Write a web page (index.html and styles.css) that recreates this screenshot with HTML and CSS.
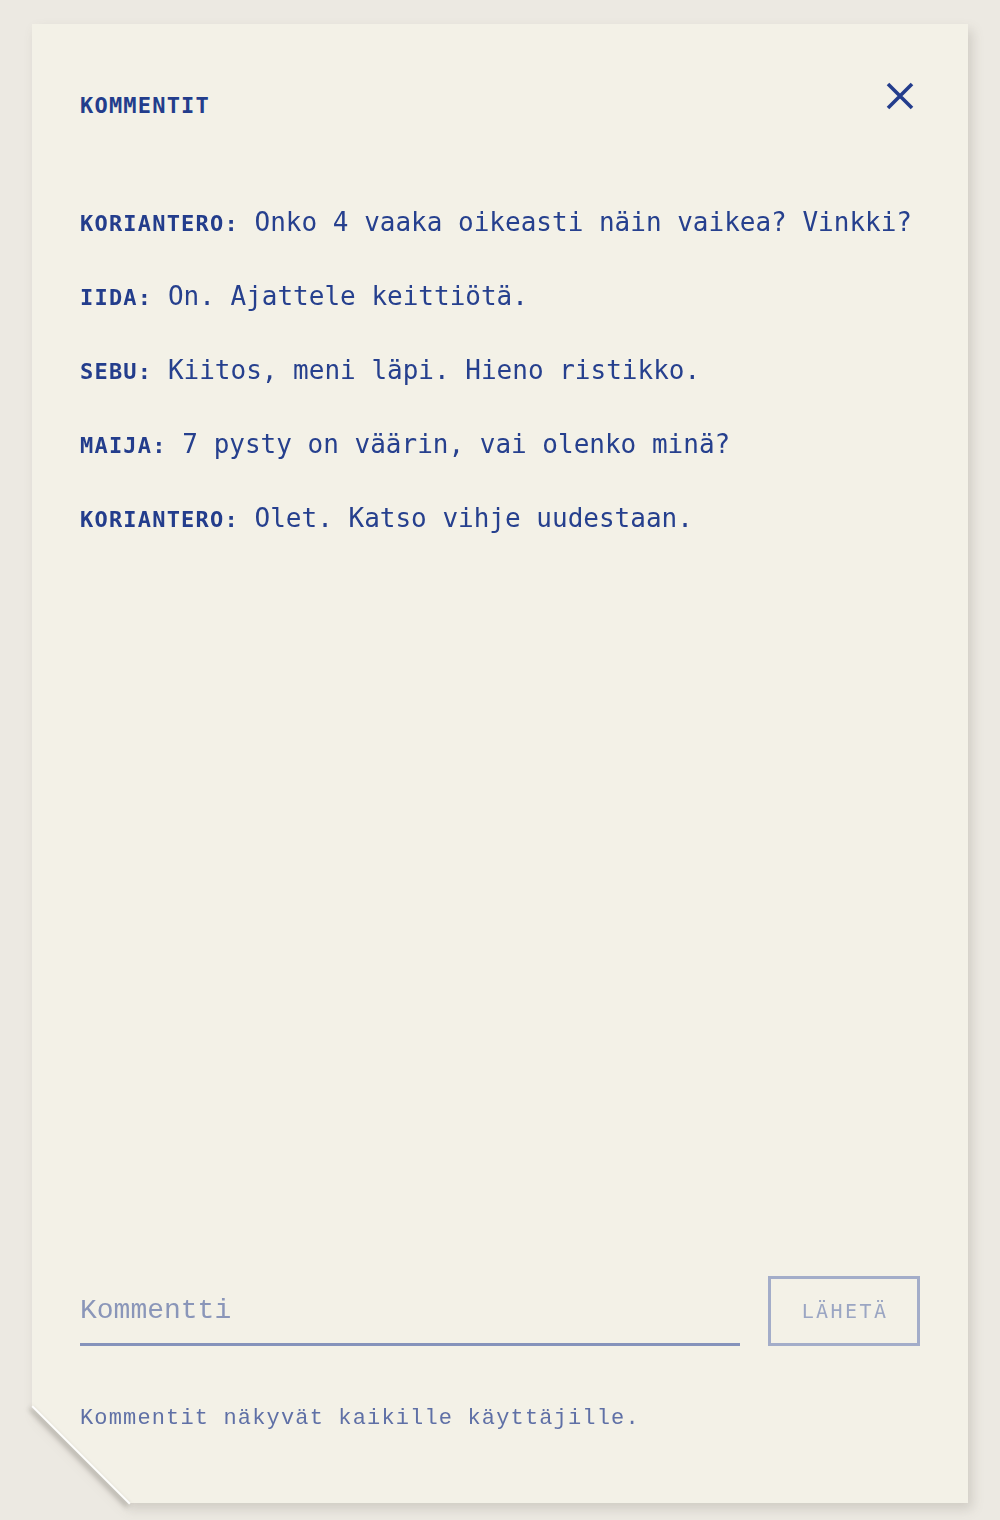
FILE: index.html
```html
<!DOCTYPE html>
<html lang="fi">
<head>
<meta charset="utf-8">
<title>Kommentit</title>
<link rel="stylesheet" href="styles.css">
</head>
<body>
<div class="sheet">
  <div class="card">
    <div class="head">
      <h1 class="title">KOMMENTIT</h1>
      <button class="close" aria-label="Sulje">
        <svg width="28" height="28" viewBox="0 0 28 28"><path d="M2 2 L26 26 M26 2 L2 26" stroke="#233d8c" stroke-width="3.6" fill="none"/></svg>
      </button>
    </div>
    <ul class="comments">
      <li class="comment"><span class="name">KORIANTERO:</span> Onko 4 vaaka oikeasti näin vaikea? Vinkki?</li>
      <li class="comment"><span class="name">IIDA:</span> On. Ajattele keittiötä.</li>
      <li class="comment"><span class="name">SEBU:</span> Kiitos, meni läpi. Hieno ristikko.</li>
      <li class="comment"><span class="name">MAIJA:</span> 7 pysty on väärin, vai olenko minä?</li>
      <li class="comment"><span class="name">KORIANTERO:</span> Olet. Katso vihje uudestaan.</li>
    </ul>
    <div class="spacer"></div>
    <form class="compose">
      <input class="field" type="text" placeholder="Kommentti">
      <button class="send" type="button">LÄHETÄ</button>
    </form>
    <p class="note">Kommentit näkyvät kaikille käyttäjille.</p>
  </div>
  <div class="fold"></div>
</div>
</body>
</html>
```
FILE: styles.css
```css
html, body {
  margin: 0;
  padding: 0;
}
body {
  background: #ece9e2;
  width: 1000px;
  height: 1520px;
  overflow: hidden;
}
.sheet {
  position: relative;
  margin: 24px 0 0 32px;
  width: 936px;
  height: 1479px;
  filter: drop-shadow(4px 6px 6px rgba(60, 55, 45, 0.16));
}
.card {
  box-sizing: border-box;
  height: 100%;
  background: #f3f1e7;
  padding: 0 48px;
  display: flex;
  flex-direction: column;
  clip-path: polygon(0 0, 100% 0, 100% 100%, 97px 100%, 0 calc(100% - 97px));
}
.fold {
  position: absolute;
  left: -20px;
  bottom: 47px;
  width: 138px;
  height: 2px;
  background: #ffffff;
  transform: rotate(45deg);
  box-shadow: 0 3px 5px rgba(60, 55, 45, 0.5);
}
.head {
  display: flex;
  justify-content: space-between;
  align-items: flex-start;
  margin-top: 56px;
}
.title {
  margin: 15px 0 0;
  font: bold 22px/22px "DejaVu Sans Mono", monospace;
  letter-spacing: 1.2px;
  color: #233d8c;
}
.close {
  width: 40px;
  height: 32px;
  margin-right: 0;
  padding: 0;
  border: 0;
  background: transparent;
  display: flex;
  align-items: center;
  justify-content: center;
}
.comments {
  list-style: none;
  margin: 88px 0 0;
  padding: 0;
  display: flex;
  flex-direction: column;
  gap: 40px;
}
.comment {
  height: 34px;
  font: 26px/34px "DejaVu Sans Mono", monospace;
  color: #26408e;
  white-space: nowrap;
}
.name {
  font: bold 22px/1 "DejaVu Sans Mono", monospace;
  letter-spacing: 1.2px;
  color: #233d8c;
}
.spacer {
  flex: 1;
}
.compose {
  display: flex;
  align-items: flex-end;
  gap: 28px;
  margin: 0;
}
.field {
  flex: 1;
  min-width: 0;
  box-sizing: border-box;
  height: 60px;
  padding: 0 0 8px;
  border: 0;
  border-bottom: 3px solid #8593bb;
  background: transparent;
  font: 28px "Liberation Mono", monospace;
  color: #2a448f;
  outline: none;
}
.field::placeholder {
  color: #8a96b9;
}
.send {
  box-sizing: border-box;
  width: 152px;
  height: 70px;
  border: 3px solid #a3adc9;
  background: transparent;
  padding: 0 0 0 2px;
  font: 20px "DejaVu Sans Mono", monospace;
  letter-spacing: 2.4px;
  color: #9ba6c3;
}
.note {
  margin: 58px 0 69px;
  font: 22px/30px "Liberation Mono", monospace;
  letter-spacing: 1.15px;
  color: #5f70a6;
}
```
